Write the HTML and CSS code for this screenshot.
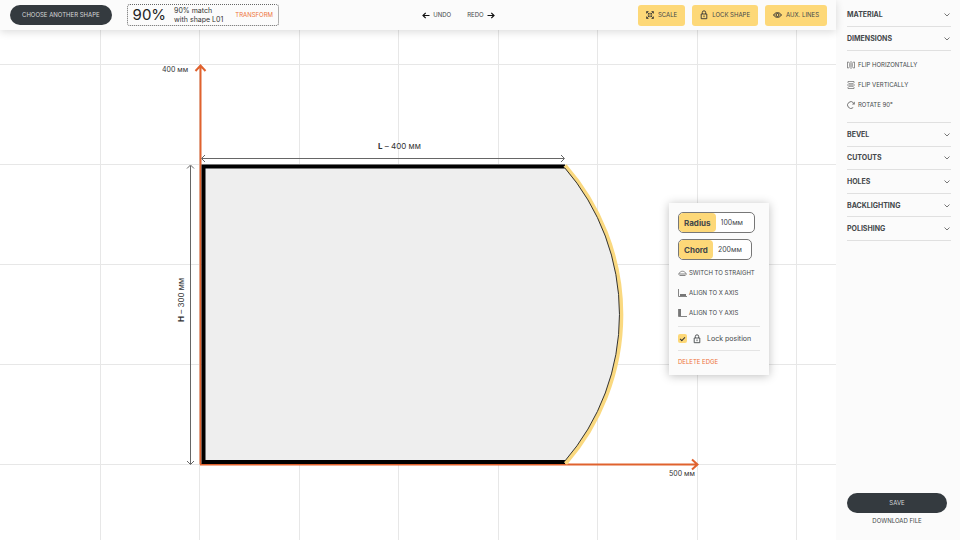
FILE: index.html
```html
<!DOCTYPE html>
<html lang="en">
<head>
<meta charset="utf-8">
<title>Shape editor</title>
<link rel="stylesheet" href="styles.css">
</head>
<body>
<svg class="defs" aria-hidden="true">
  <symbol id="chevron" viewBox="0 0 8 6"><path d="M1.500 1.500 4 4 6.500 1.500"/></symbol>
  <symbol id="lock" viewBox="0 0 8 10"><path d="M2.300 4V2.500a1.700 1.700 0 0 1 3.400 0V4M1.200 4h5.600v4.700H1.200zM4 5.500v1.700"/></symbol>
</svg>
<div class="app">
  <main class="workspace">
    <header class="toolbar">
      <div class="group">
        <button class="pill" type="button">CHOOSE ANOTHER SHAPE</button>
        <div class="match">
          <strong class="percent">90%</strong>
          <p class="match-text">90% match<br>with shape L01</p>
          <button class="link accent" type="button">TRANSFORM</button>
        </div>
      </div>
      <div class="history">
        <button class="link" type="button"><svg class="arrow" viewBox="0 0 8 7"><path d="M7.500 3.500H1M3.700.8 1 3.500l2.700 2.700"/></svg>UNDO</button>
        <button class="link" type="button">REDO<svg class="arrow" viewBox="0 0 8 7"><path d="M.5 3.500H7M4.300.8 7 3.500 4.300 6.200"/></svg></button>
      </div>
      <div class="actions">
        <button class="action" type="button"><svg class="icon-8" viewBox="0 0 8 8"><path d="M.5 2.500v-2h2M5.500.5h2v2M7.500 5.500v2h-2M2.500 7.500h-2v-2M1 1l2.200 2.200M7 1 4.800 3.200M1 7l2.200-2.200M7 7 4.800 4.800M3.200 1.800v1.400H1.800M4.800 1.800v1.400h1.400M3.200 6.200V4.800H1.800M4.800 6.200V4.800h1.400"/></svg>SCALE</button>
        <button class="action" type="button"><svg class="icon-lock"><use href="#lock"/></svg>LOCK SHAPE</button>
        <button class="action" type="button"><svg class="icon-eye" viewBox="0 0 9 8"><path d="M.6 4C2.200.9 6.800.9 8.400 4 6.800 7.100 2.200 7.100.6 4z"/><circle cx="4.500" cy="4" r="1.500"/></svg>AUX. LINES</button>
      </div>
    </header>
    <section class="canvas" aria-label="Drawing">
      <svg class="drawing" viewBox="0 30 836 510" preserveAspectRatio="xMinYMin slice">
        <path class="grid-lines" d="M100.500 30V540M199.500 30V540M299.500 30V540M398.500 30V540M498.500 30V540M597.500 30V540M697.500 30V540M796.500 30V540M0 64.500H836M0 164.500H836M0 264.500H836M0 364.500H836M0 464.500H836"/>
        <path class="shape" d="M203 166.500H565A225 225 0 0 1 565 462H203z"/>
        <path class="axis" d="M200.500 464.500V66M195.500 71l5-5.500 5 5.500M200 464.500H697M692 459.500l5.500 5-5.500 5"/>
        <path class="edge" d="M565 166.500H203.500V462H565"/>
        <path class="arc" d="M565 165.500A226 226 0 0 1 565.500 463.500"/>
        <path class="arc-inner" d="M564.500 167.500A224 224 0 0 1 564.500 461.500"/>
        <path class="dimension" d="M202 158.500H564M205 155l-3.500 3.500 3.500 3.500M561 155l3.500 3.500-3.500 3.500M190.500 166V464M187 168.500l3.500-3.500 3.500 3.500M187 461l3.500 3.500 3.500-3.500"/>
        <text class="label" x="162" y="72">400 мм</text>
        <text class="label" x="669" y="476">500 мм</text>
        <text class="label large" x="378" y="149"><tspan class="bold">L</tspan> – 400 мм</text>
        <text class="label large" transform="translate(184 322) rotate(-90)"><tspan class="bold">H</tspan> – 300 мм</text>
      </svg>
      <form class="edge-panel">
        <label class="field"><span class="field-name">Radius</span><input class="field-value" value="100мм"></label>
        <label class="field"><span class="field-name">Chord</span><input class="field-value" value="200мм"></label>
        <div class="edge-tools">
          <button class="tool" type="button"><svg class="icon-9" viewBox="0 0 9 8"><path d="M1.500 4.500C1.500 1.500 7.500 1.500 7.500 4.500M0 5h9M1.500 6.500h6"/></svg>SWITCH TO STRAIGHT</button>
          <button class="tool" type="button"><svg class="icon-9" viewBox="0 0 9 8"><path d="M.5 0v7.500H9"/><path class="solid" d="M2 5h6v2H2z"/></svg>ALIGN TO X AXIS</button>
          <button class="tool" type="button"><svg class="icon-9" viewBox="0 0 9 8"><path d="M.5 0v7.500H9"/><path class="solid" d="M1 0h2v7H1z"/></svg>ALIGN TO Y AXIS</button>
        </div>
        <label class="lock-row"><input class="check" type="checkbox" checked><svg class="icon-lock"><use href="#lock"/></svg>Lock position</label>
        <button class="link accent delete" type="button">DELETE EDGE</button>
      </form>
    </section>
  </main>
  <aside class="sidebar">
    <div class="sections top">
      <button class="section" type="button">MATERIAL<svg class="chevron"><use href="#chevron"/></svg></button>
      <button class="section" type="button">DIMENSIONS<svg class="chevron"><use href="#chevron"/></svg></button>
    </div>
    <div class="side-tools">
      <button class="tool" type="button"><svg class="icon-8" viewBox="0 0 8 8"><path d="M4 0v8M.5 1h1.200l1 1.500v3l-1 1.500H.5zM7.500 1H6.300l-1 1.500v3l1 1.500h1.200z"/></svg>FLIP HORIZONTALLY</button>
      <button class="tool" type="button"><svg class="icon-8" viewBox="0 0 8 8"><path d="M0 4h8M1 .5h6v1.200l-1 1H2l-1-1zM1 7.500h6V6.300l-1-1H2l-1 1z"/></svg>FLIP VERTICALLY</button>
      <button class="tool" type="button"><svg class="icon-8" viewBox="0 0 8 8"><path class="heavy" d="M6.200 6.600A3.400 3.400 0 1 1 6.500 1.800"/><path class="solid" d="M7.800.6v3H4.900z"/></svg>ROTATE 90°</button>
    </div>
    <div class="sections rest">
      <button class="section" type="button">BEVEL<svg class="chevron"><use href="#chevron"/></svg></button>
      <button class="section" type="button">CUTOUTS<svg class="chevron"><use href="#chevron"/></svg></button>
      <button class="section" type="button">HOLES<svg class="chevron"><use href="#chevron"/></svg></button>
      <button class="section" type="button">BACKLIGHTING<svg class="chevron"><use href="#chevron"/></svg></button>
      <button class="section" type="button">POLISHING<svg class="chevron"><use href="#chevron"/></svg></button>
    </div>
    <div class="save-area">
      <button class="pill" type="button">SAVE</button>
      <button class="link" type="button">DOWNLOAD FILE</button>
    </div>
  </aside>
</div>
</body>
</html>
```
FILE: styles.css
```css
* { box-sizing: border-box; }
body {
  margin: 0;
  font-family: Inter, "Open Sans", sans-serif;
  font-size: 6px;
  line-height: 8px;
  color: #43474a;
}
button, input {
  margin: 0;
  padding: 0;
  border: 0;
  background: none;
  color: inherit;
  font: inherit;
}
button { cursor: pointer; }
svg { fill: none; stroke: currentColor; flex: none; }
.defs { position: absolute; width: 0; height: 0; }
.app {
  display: grid;
  grid-template-columns: 1fr 124px;
  min-height: 100vh;
}
.workspace { display: flex; flex-direction: column; min-width: 0; }
.toolbar {
  display: flex;
  justify-content: space-between;
  align-items: center;
  height: 30px;
  padding: 0 9px 0 10px;
  background: #fbfbfb;
  box-shadow: 0 2px 8px rgba(0, 0, 0, 0.14);
  z-index: 1;
}
.group { display: flex; align-items: center; gap: 15px; }
.pill {
  height: 20px;
  padding: 0 12px;
  border-radius: 10px;
  background: #343a3f;
  color: #d5d7d8;
}
.match {
  display: flex;
  align-items: center;
  height: 22px;
  padding: 0 5px;
  border: 1px dotted #666;
  border-radius: 3px;
}
.percent { font-size: 15px; font-weight: 400; line-height: 18px; color: #222; }
.match-text { margin: 0 12px 0 8px; font-size: 7px; line-height: 9px; white-space: nowrap; color: #333; }
.link { display: flex; align-items: center; gap: 3px; }
.accent { color: #ee7138; }
.history { display: flex; gap: 16px; }
.arrow { width: 8px; height: 7px; color: #111; stroke-width: 1.2; }
.actions { display: flex; justify-content: flex-end; gap: 7px; }
.action {
  display: flex;
  align-items: center;
  gap: 4px;
  height: 21px;
  padding: 0 8px;
  border-radius: 3px;
  background: #fdd878;
}
.action svg { color: #333; }
.icon-8 { width: 8px; height: 8px; stroke-width: 0.8; }
.icon-9 { width: 9px; height: 8px; stroke-width: 0.9; }
.icon-lock { width: 8px; height: 10px; stroke-width: 0.9; }
.icon-eye { width: 9px; height: 8px; }
.solid { fill: currentColor; stroke: none; }
.heavy { stroke-width: 1; }
.canvas { position: relative; flex: 1; overflow: hidden; background: #fff; }
.drawing { display: block; width: 100%; height: 100%; }
.grid-lines { stroke: #e7e7e7; }
.shape { fill: #eee; stroke: none; }
.axis { stroke: #e0622e; stroke-width: 2; }
.edge { stroke: #000; stroke-width: 4; }
.arc { stroke: #fad980; stroke-width: 4; }
.arc-inner { stroke: #333; stroke-width: 1; }
.dimension { stroke: #666; }
.label { fill: #333; stroke: none; font-size: 7px; }
.large { font-size: 8px; }
.bold { font-weight: 700; }
.edge-panel {
  position: absolute;
  top: 173px;
  left: 669px;
  display: flex;
  flex-direction: column;
  align-items: flex-start;
  gap: 6px;
  padding: 9px;
  background: #fbfbfb;
  box-shadow: 0 1px 9px rgba(0, 0, 0, 0.25);
}
.field {
  display: flex;
  align-items: stretch;
  height: 21px;
  border: 1px solid #777;
  border-radius: 5px;
  background: #fff;
  overflow: hidden;
}
.field-name {
  display: flex;
  align-items: center;
  padding: 0 5px;
  border-radius: 4px;
  background: #fdd878;
  font-size: 8px;
  font-weight: 700;
}
.field-value { width: 38px; padding: 0 5px; font-size: 7px; }
.edge-tools { display: grid; gap: 12px; padding: 3px 5px 3px 0; }
.tool { display: flex; align-items: center; gap: 3px; white-space: nowrap; }
.edge-tools .tool { gap: 2px; }
.tool svg { color: #777; }
.lock-row {
  display: flex;
  align-items: center;
  gap: 6px;
  align-self: stretch;
  height: 25px;
  border: solid #e4e4e4;
  border-width: 1px 0;
  font-size: 7px;
}
.check {
  display: grid;
  place-items: center;
  appearance: none;
  width: 9px;
  height: 9px;
  border-radius: 2px;
  background: #fdd878;
}
.check:checked::after {
  content: "";
  width: 4px;
  height: 2px;
  border: solid #333;
  border-width: 0 0 1px 1px;
  transform: rotate(-45deg);
}
.delete { padding: 1px 0 0; }
.sidebar {
  display: flex;
  flex-direction: column;
  padding: 3px 9px 15px 11px;
  background: #fbfbfb;
}
.sections { display: grid; grid-auto-rows: 1fr; }
.top { height: 48px; }
.rest { height: 118px; }
.section {
  display: flex;
  align-items: center;
  justify-content: space-between;
  padding-top: 1px;
  border-bottom: 1px solid #e0e0e0;
  font-size: 7px;
  font-weight: 700;
}
.chevron { width: 8px; height: 6px; stroke-width: 0.8; color: #555; }
.side-tools {
  display: grid;
  gap: 12px;
  padding: 10px 0 13px;
  border-bottom: 1px solid #e0e0e0;
}
.save-area { display: grid; gap: 4px; margin-top: auto; }
.save-area .pill { margin-right: 4px; }
.save-area .link { justify-content: center; margin-right: 4px; }
```
